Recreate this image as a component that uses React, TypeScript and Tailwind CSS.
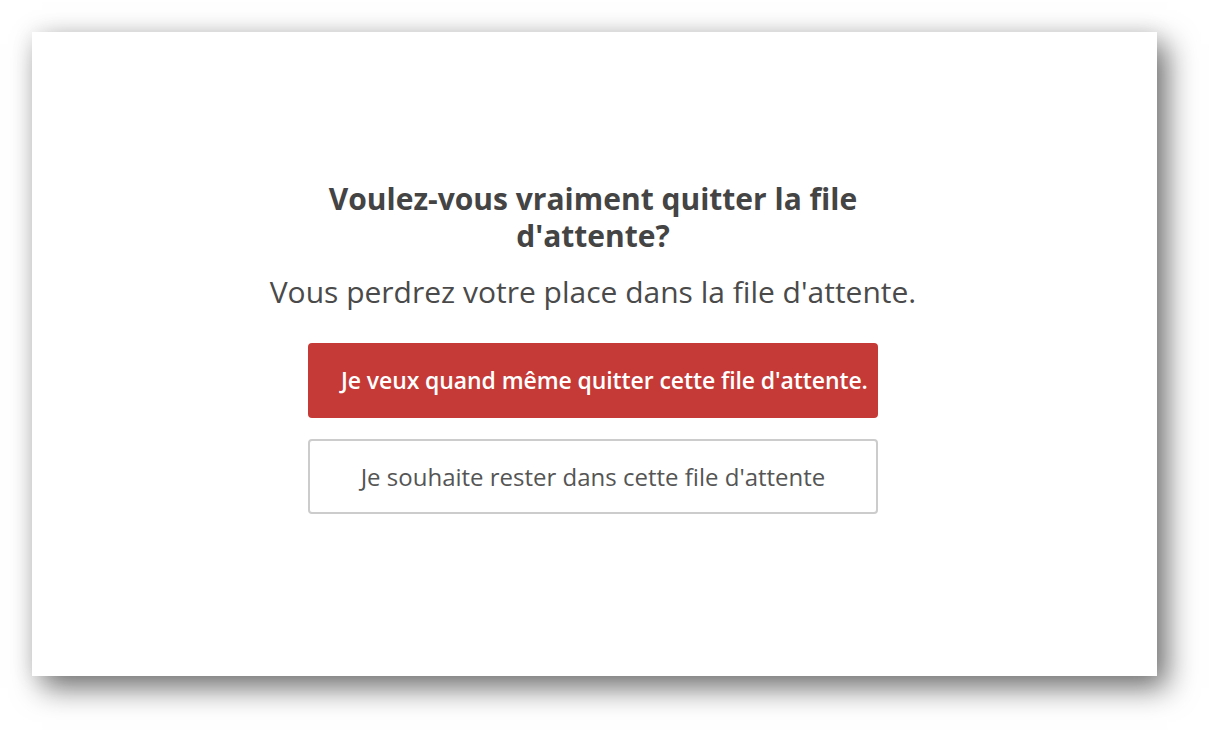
export default function App() {
  return (
    <div className="w-[1222px] h-[741px] bg-white pl-[32px] pt-[32px]" style={{ fontFamily: '"Open Sans", Lato, sans-serif' }}>
      <div className="w-[1125px] h-[644px] bg-white shadow-[10px_12px_28px_rgba(0,0,0,0.55),0_0_22px_rgba(0,0,0,0.08)] flex flex-col items-center pt-[148px] pr-[3px]">
        <h1 className="w-[580px] text-center text-[30px] leading-[37px] font-bold text-[#444444]">
          Voulez-vous vraiment quitter la file d'attente?
        </h1>
        <p className="mt-[20px] text-[30px] leading-[36px] text-[#4a4a4a] whitespace-nowrap">
          Vous perdrez votre place dans la file d'attente.
        </p>
        <div className="mt-[33px] flex flex-col gap-[21px] w-[570px]">
          <button className="h-[75px] w-full rounded-[4px] bg-[#c53a36] pl-[33px] text-left text-white font-semibold text-[23px] tracking-[-0.1px] whitespace-nowrap">
            Je veux quand même quitter cette file d'attente.
          </button>
          <button className="h-[75px] w-full rounded-[4px] bg-white border-2 border-[#cccccc] text-center text-[#555555] text-[24px] whitespace-nowrap">
            Je souhaite rester dans cette file d'attente
          </button>
        </div>
      </div>
    </div>
  );
}
